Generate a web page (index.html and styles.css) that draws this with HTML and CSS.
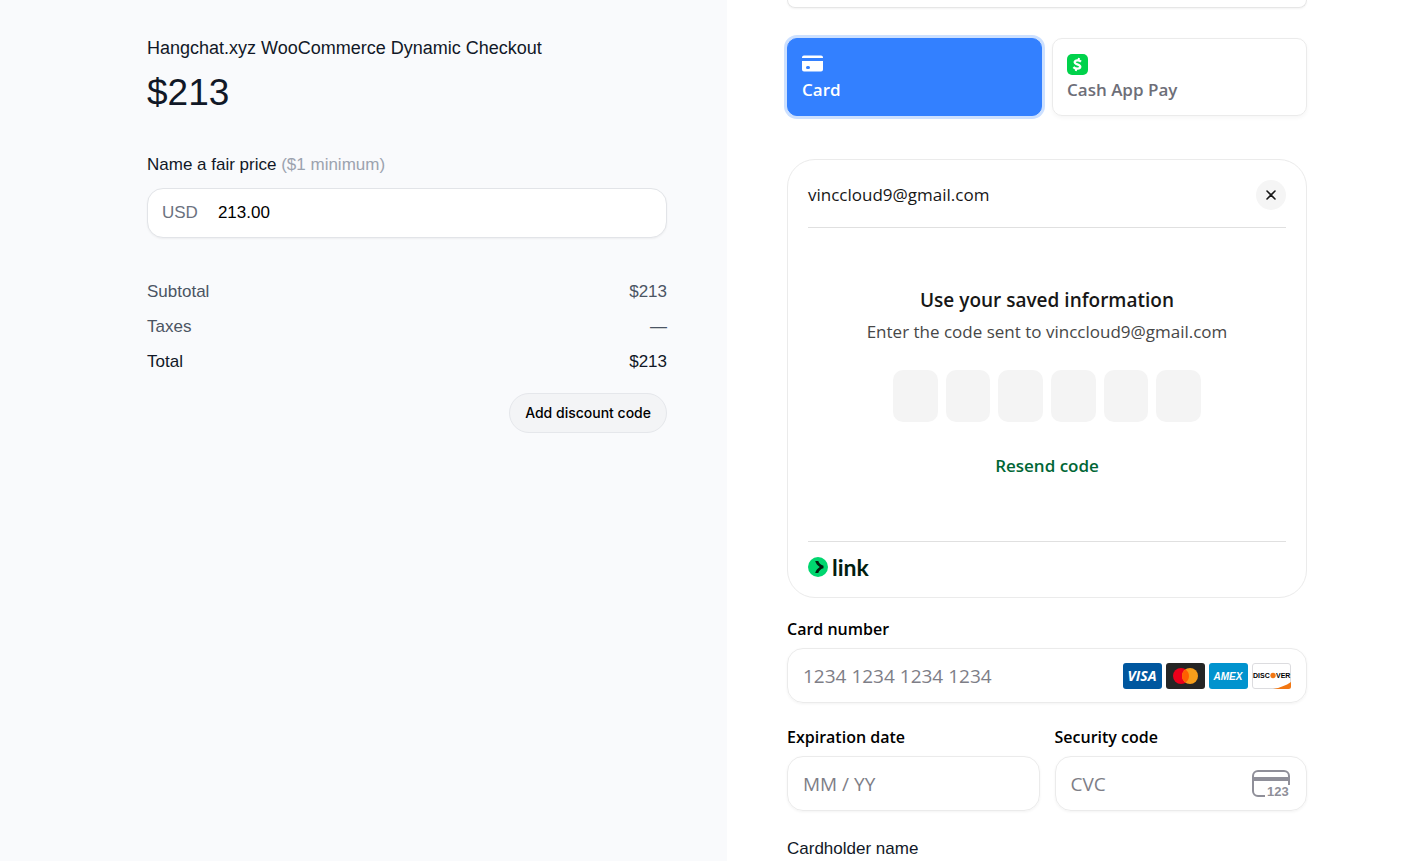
FILE: index.html
```html
<!DOCTYPE html>
<html lang="en">
<head>
<meta charset="UTF-8">
<meta name="viewport" content="width=device-width, initial-scale=1.0">
<title>Checkout</title>
<link rel="stylesheet" href="styles.css">
</head>
<body>
    <div class="checkout">
        <section class="summary">
            <div class="column">
                <h1>Hangchat.xyz WooCommerce Dynamic Checkout</h1>
                <div class="price">$213</div>
                <label class="price-label" for="amount">Name a fair price <span>($1 minimum)</span></label>
                <div class="amount-box">
                    <span>USD</span>
                    <input type="text" id="amount" value="213.00">
                </div>
                <dl class="totals">
                    <div><dt>Subtotal</dt><dd>$213</dd></div>
                    <div><dt>Taxes</dt><dd>—</dd></div>
                    <div class="total"><dt>Total</dt><dd>$213</dd></div>
                </dl>
                <button type="button" class="discount">Add discount code</button>
            </div>
        </section>

        <section class="payment">
            <form class="column">
                <div class="box-end"></div>
                <div class="tabs">
                    <button type="button" class="tab active">
                        <svg width="21" height="21" viewBox="0 0 21 21" aria-hidden="true">
                            <path fill="#fff" d="M2 1.500h17a2 2 0 0 1 2 2V4H0v-.5a2 2 0 0 1 2-2z"/>
                            <path fill="#fff" fill-rule="evenodd" d="M0 7h21v8.500a2 2 0 0 1-2 2H2a2 2 0 0 1-2-2zM5.500 12a1.500 1.500 0 0 0 0 3h1a1.500 1.500 0 0 0 0-3z"/>
                        </svg>
                        Card
                    </button>
                    <button type="button" class="tab">
                        <svg width="21" height="21" viewBox="0 0 21 21" aria-hidden="true">
                            <rect width="21" height="21" rx="5" fill="#00d24b"/>
                            <path fill="none" stroke="#fff" stroke-width="2.300" d="M14 7.600C12.500 6.300 8.300 5.500 7.700 8c-.5 2.700 6 1.900 5.600 4.900-.4 2.600-4.800 2.100-6.900.2"/>
                            <path stroke="#fff" stroke-width="2" d="M12 4l-.5 2.200M9.300 14.600L8.800 17"/>
                        </svg>
                        Cash App Pay
                    </button>
                </div>

                <div class="link-card">
                    <div class="link-header">
                        <span>vinccloud9@gmail.com</span>
                        <button type="button" class="close" aria-label="Close">
                            <svg width="10" height="10" viewBox="0 0 10 10"><path d="M1 1l8 8M9 1L1 9" stroke="#171717" stroke-width="1.600" stroke-linecap="round"/></svg>
                        </button>
                    </div>
                    <div class="link-body">
                        <h2>Use your saved information</h2>
                        <p>Enter the code sent to vinccloud9@gmail.com</p>
                        <div class="code">
                            <input type="text" maxlength="1" aria-label="Digit 1">
                            <input type="text" maxlength="1" aria-label="Digit 2">
                            <input type="text" maxlength="1" aria-label="Digit 3">
                            <input type="text" maxlength="1" aria-label="Digit 4">
                            <input type="text" maxlength="1" aria-label="Digit 5">
                            <input type="text" maxlength="1" aria-label="Digit 6">
                        </div>
                        <button type="button" class="resend">Resend code</button>
                    </div>
                    <div class="link-footer">
                        <svg width="20" height="20" viewBox="0 0 20 20" aria-hidden="true">
                            <circle cx="10" cy="10" r="10" fill="#00d66f"/>
                            <path fill="#011e0f" d="M10.300 4H7.200c.6 2.500 2.400 4.600 4.600 6-2.200 1.400-4 3.500-4.600 6h3.100c.7-2.300 2.800-4.300 5.200-4.700V8.700C13.100 8.300 11 6.300 10.300 4z"/>
                        </svg>
                        <span>link</span>
                    </div>
                </div>

                <div class="field">
                    <label for="number">Card number</label>
                    <div class="input-box">
                        <input type="text" id="number" placeholder="1234 1234 1234 1234">
                        <div class="brands">
                            <svg width="39" height="26" viewBox="0 0 39 26" role="img" aria-label="Visa">
                                <rect width="39" height="26" rx="3" fill="#00579f"/>
                                <text x="19" y="18" class="visa">VISA</text>
                            </svg>
                            <svg width="39" height="26" viewBox="0 0 39 26" role="img" aria-label="Mastercard">
                                <rect width="39" height="26" rx="3" fill="#252525"/>
                                <circle cx="15" cy="13" r="8" fill="#eb001b"/>
                                <circle cx="24" cy="13" r="8" fill="#f79e1b"/>
                                <path fill="#ff5f00" d="M19.500 6.400a8 8 0 0 1 0 13.200 8 8 0 0 1 0-13.200z"/>
                            </svg>
                            <svg width="39" height="26" viewBox="0 0 39 26" role="img" aria-label="American Express">
                                <rect width="39" height="26" rx="3" fill="#0193ce"/>
                                <text x="19" y="17" class="amex">AMEX</text>
                            </svg>
                            <svg width="39" height="26" viewBox="0 0 39 26" role="img" aria-label="Discover">
                                <rect x=".5" y=".5" width="38" height="25" rx="2.500" fill="#fff" stroke="#dcdcdf"/>
                                <path fill="#f27712" d="M21 26c7-1.200 13-3.500 18-7v4.500a2.500 2.500 0 0 1-2.500 2.500z"/>
                                <text x="1" y="15" class="discover">DISC</text>
                                <circle cx="21" cy="12.500" r="2.700" fill="#f27712"/>
                                <text x="24" y="15" class="discover">VER</text>
                            </svg>
                        </div>
                    </div>
                </div>
                <div class="row">
                    <div class="field">
                        <label for="expiry">Expiration date</label>
                        <div class="input-box">
                            <input type="text" id="expiry" placeholder="MM / YY">
                        </div>
                    </div>
                    <div class="field">
                        <label for="cvc">Security code</label>
                        <div class="input-box">
                            <input type="text" id="cvc" placeholder="CVC">
                            <svg width="39" height="28" viewBox="0 0 39 28" aria-hidden="true">
                                <path fill="none" stroke="#8f8f99" stroke-width="2" d="M13 26H6a5 5 0 0 1-5-5V6a5 5 0 0 1 5-5h26a5 5 0 0 1 5 5v9"/>
                                <path fill="#8f8f99" d="M1 7h36v4H1z"/>
                                <text x="15" y="26" class="digits">123</text>
                            </svg>
                        </div>
                    </div>
                </div>
                <div class="cardholder">Cardholder name</div>
            </form>
        </section>
    </div>
</body>
</html>
```
FILE: styles.css
```css
* {
    box-sizing: border-box;
}
body {
    margin: 0;
    font-family: "Liberation Sans", Arial, sans-serif;
    font-size: 17px;
    line-height: 24px;
    color: #111827;
    background-color: #fff;
}
button, input {
    font: inherit;
    color: inherit;
    margin: 0;
    padding: 0;
    border: none;
    background: none;
    outline: none;
}
button {
    cursor: pointer;
}
h1, h2, p, dl, dd {
    margin: 0;
}
svg {
    display: block;
    flex: none;
}
.checkout {
    display: grid;
    grid-template-columns: 727fr 700fr;
    min-height: 100vh;
}
.column {
    width: 100%;
    max-width: 520px;
}
.summary {
    display: flex;
    justify-content: flex-end;
    padding: 36px 60px 0;
    background-color: #f9fafc;
}
.summary .column {
    display: flex;
    flex-direction: column;
}
.summary h1 {
    font-size: 18px;
    font-weight: 400;
}
.price {
    margin-top: 9px;
    font-size: 37px;
    line-height: 48px;
}
.price-label {
    margin-top: 36px;
}
.price-label span {
    color: #9ca3af;
}
.amount-box {
    display: flex;
    align-items: center;
    gap: 20px;
    height: 50px;
    margin-top: 11px;
    padding: 0 14px;
    border: 1px solid #e2e4e8;
    border-radius: 16px;
    background-color: #fff;
    box-shadow: 0 1px 2px rgba(0, 0, 0, 0.05);
}
.amount-box span {
    color: #6b7280;
}
.amount-box input {
    flex: 1;
    min-width: 0;
    color: #000;
}
.totals {
    display: grid;
    gap: 11px;
    margin-top: 42px;
    color: #4b5563;
}
.totals div {
    display: flex;
    justify-content: space-between;
}
.totals .total {
    color: #111827;
}
.discount {
    align-self: flex-end;
    height: 40px;
    margin-top: 19px;
    padding: 0 15px;
    border: 1px solid #e5e7eb;
    border-radius: 20px;
    background-color: #f3f4f6;
    color: #000;
    font-family: Inter, sans-serif;
    font-size: 14px;
    font-weight: 500;
}
.payment {
    padding: 0 60px;
    font-family: "Open Sans", "Noto Sans", sans-serif;
}
.box-end {
    height: 8px;
    border: 1px solid #e6e6e6;
    border-top: none;
    border-radius: 0 0 16px 16px;
    box-shadow: 0 1px 2px rgba(0, 0, 0, 0.05);
}
.tabs {
    display: grid;
    grid-template-columns: 1fr 1fr;
    gap: 10px;
    margin-top: 30px;
}
.tab {
    display: flex;
    flex-direction: column;
    align-items: flex-start;
    gap: 3px;
    height: 78px;
    padding: 15px 14px;
    border: 1px solid #ebebeb;
    border-radius: 10px;
    box-shadow: 0 2px 4px rgba(0, 0, 0, 0.04);
    color: #6d6e78;
    font-weight: 600;
}
.tab.active {
    border-color: #3380ff;
    background-color: #3380ff;
    box-shadow: 0 0 0 3px #cce0ff;
    color: #fff;
}
.link-card {
    margin-top: 43px;
    padding: 20px 20px 18px;
    border: 1px solid #ebebeb;
    border-radius: 28px;
    color: #171717;
}
.link-header {
    display: flex;
    align-items: center;
    justify-content: space-between;
    padding-bottom: 17px;
    border-bottom: 1px solid #e0e0e0;
}
.close {
    display: flex;
    align-items: center;
    justify-content: center;
    width: 30px;
    height: 30px;
    border-radius: 50%;
    background-color: #f5f5f5;
}
.link-body {
    display: flex;
    flex-direction: column;
    align-items: center;
    padding: 60px 0 63px;
}
.link-body h2 {
    font-size: 19px;
    font-weight: 600;
}
.link-body p {
    margin-top: 8px;
    color: #474747;
}
.code {
    display: grid;
    grid-template-columns: repeat(6, 1fr);
    gap: 8px;
    width: 308px;
    margin-top: 26px;
}
.code input {
    width: 100%;
    height: 52px;
    border-radius: 10px;
    background-color: #f4f4f4;
    text-align: center;
}
.resend {
    margin-top: 32px;
    color: #006635;
    font-weight: 600;
}
.link-footer {
    display: flex;
    align-items: center;
    gap: 4px;
    padding-top: 13px;
    border-top: 1px solid #e0e0e0;
    color: #011e0f;
    font-family: Lato, sans-serif;
    font-size: 23px;
    font-weight: 700;
}
.field {
    display: flex;
    flex-direction: column;
    gap: 7px;
    margin-top: 19px;
}
.field label {
    color: #000;
    font-size: 16px;
    font-weight: 600;
}
.input-box {
    display: flex;
    align-items: center;
    height: 55px;
    padding: 0 15px;
    border: 1px solid #ebebeb;
    border-radius: 16px;
    box-shadow: 0 1px 3px rgba(0, 0, 0, 0.05);
}
.input-box input {
    flex: 1;
    min-width: 0;
    font-size: 19px;
}
.input-box input::placeholder {
    color: #7e7e87;
    opacity: 1;
}
.brands {
    display: flex;
    gap: 4px;
}
.row {
    display: grid;
    grid-template-columns: minmax(0, 1fr) minmax(0, 1fr);
    gap: 15px;
}
.row .field {
    margin-top: 22px;
}
.cardholder {
    margin-top: 26px;
    font-family: "Liberation Sans", Arial, sans-serif;
}
.visa {
    fill: #fff;
    font: italic 700 14px "Open Sans", sans-serif;
    text-anchor: middle;
}
.amex {
    fill: #fff;
    font: italic 700 10px "Liberation Sans", sans-serif;
    text-anchor: middle;
}
.discover {
    fill: #000;
    font: 700 7px "Liberation Sans", sans-serif;
}
.digits {
    fill: #8f8f99;
    font: 700 13px "Liberation Sans", sans-serif;
}
```
